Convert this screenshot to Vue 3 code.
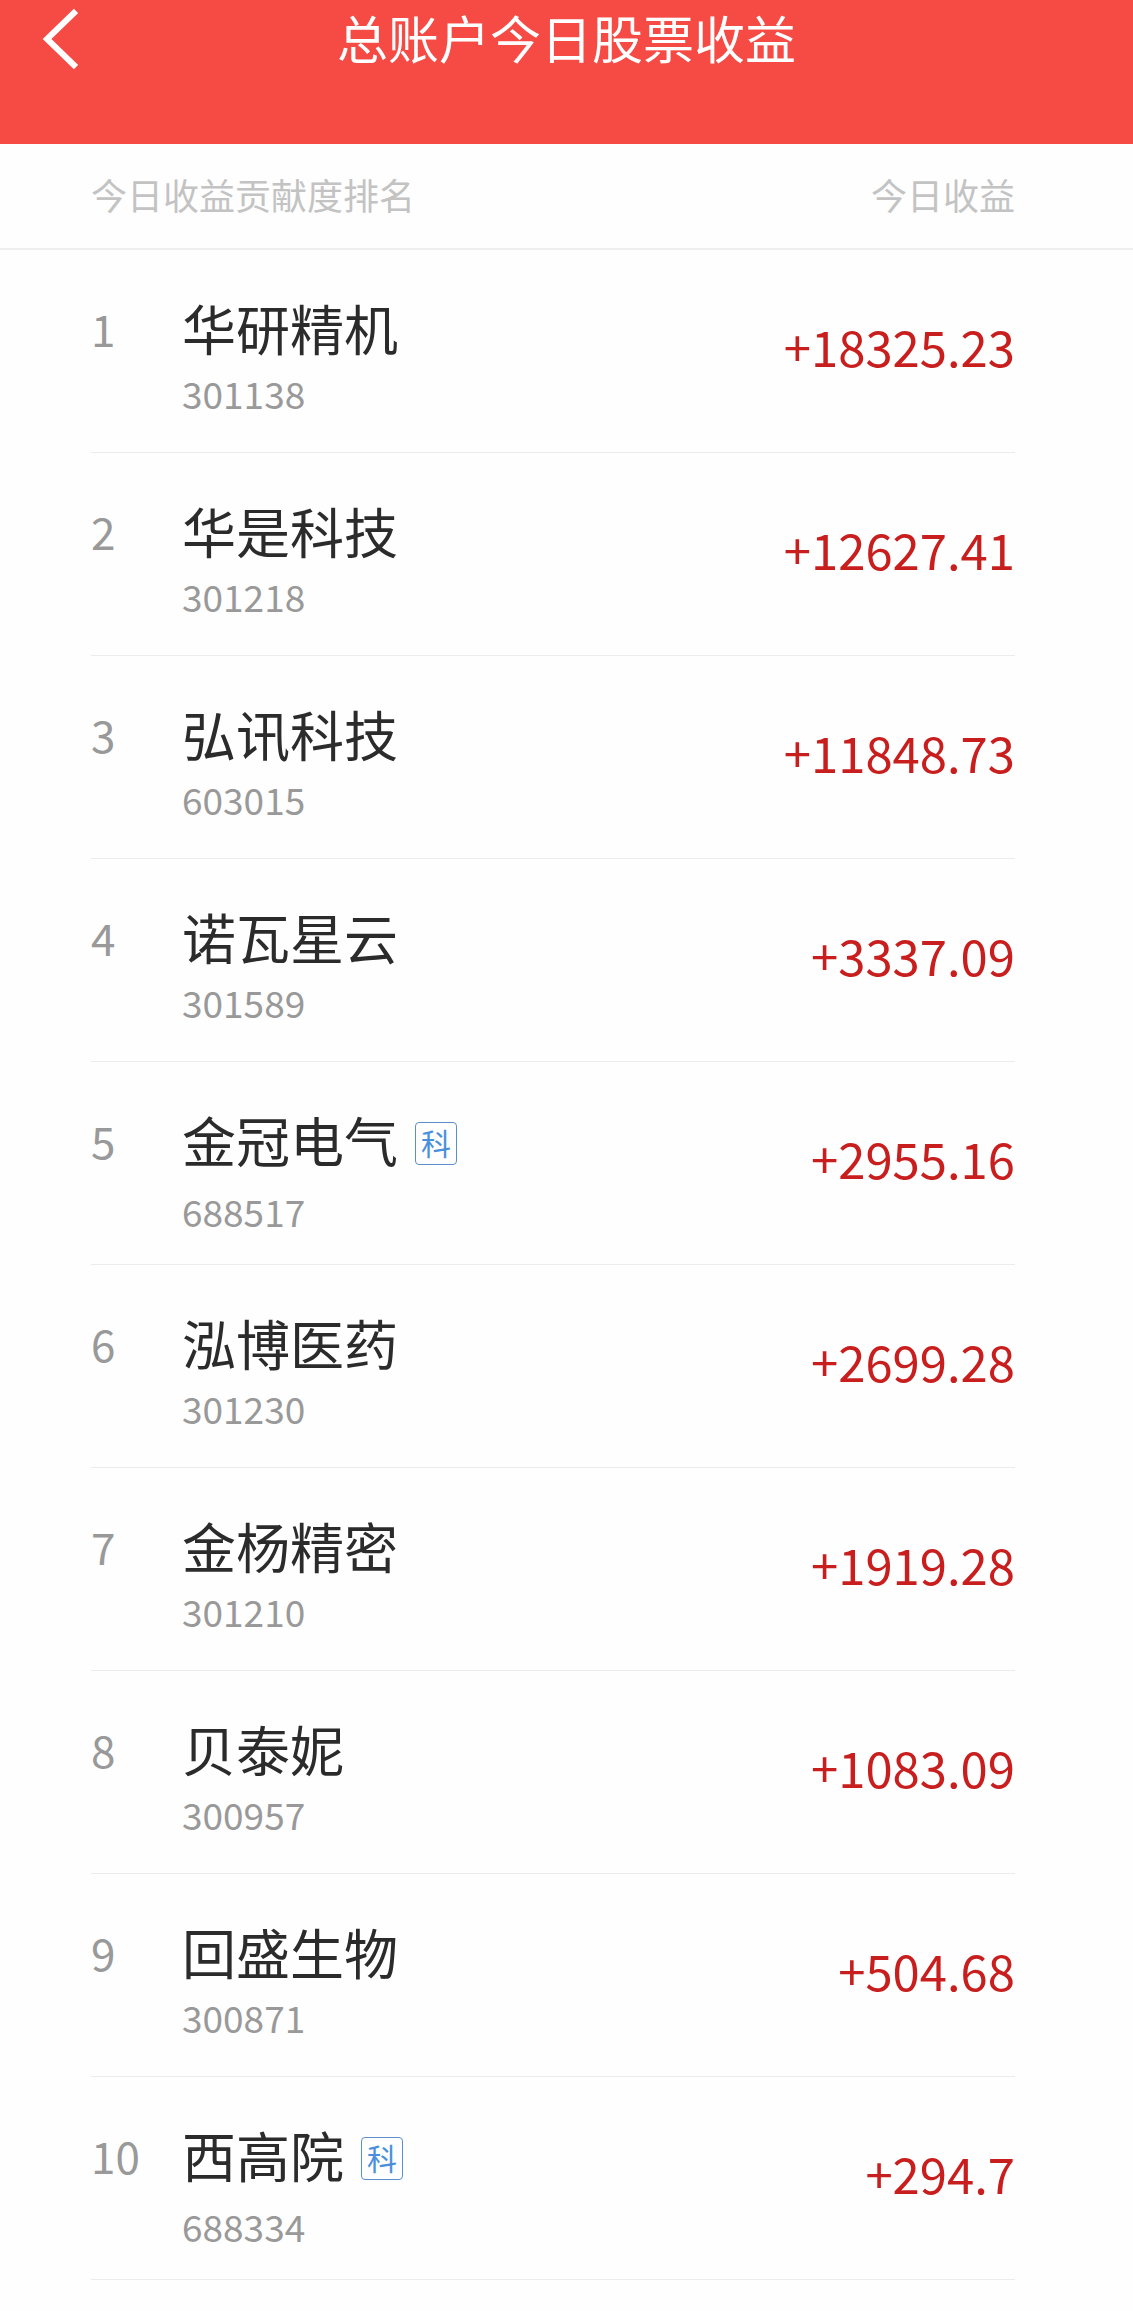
<script setup>
import { ref } from "vue";

const stocks = ref([
  { name: "华研精机", code: "301138", profit: "+18325.23" },
  { name: "华是科技", code: "301218", profit: "+12627.41" },
  { name: "弘讯科技", code: "603015", profit: "+11848.73" },
  { name: "诺瓦星云", code: "301589", profit: "+3337.09" },
  { name: "金冠电气", code: "688517", profit: "+2955.16", tag: "科" },
  { name: "泓博医药", code: "301230", profit: "+2699.28" },
  { name: "金杨精密", code: "301210", profit: "+1919.28" },
  { name: "贝泰妮", code: "300957", profit: "+1083.09" },
  { name: "回盛生物", code: "300871", profit: "+504.68" },
  { name: "西高院", code: "688334", profit: "+294.7", tag: "科" },
]);

const goBack = () => {
  window.history.back();
};
</script>


<template>
  <div class="page">
    <header class="top-bar">
      <button type="button" class="back" aria-label="返回" @click="goBack">
        <svg viewBox="0 0 40 64" width="40" height="64" fill="none">
          <path d="M38 4 L9 32 L38 60" stroke="#fff" stroke-width="6" />
        </svg>
      </button>
      <h1>总账户今日股票收益</h1>
    </header>

    <table>
      <thead>
        <tr>
          <th scope="col">今日收益贡献度排名</th>
          <th scope="col">今日收益</th>
        </tr>
      </thead>
      <tbody>
        <tr v-for="(stock, index) in stocks" :key="stock.code">
          <td class="rank">{{ index + 1 }}</td>
          <td class="stock">
            <div class="name" :class="{ tagged: stock.tag }">
              {{ stock.name }}
              <span v-if="stock.tag" class="tag">{{ stock.tag }}</span>
            </div>
            <div class="code">{{ stock.code }}</div>
          </td>
          <td class="profit">{{ stock.profit }}</td>
        </tr>
      </tbody>
    </table>
  </div>
</template>


<style>
body {
  margin: 0;
  background-color: #fefefe;
}
</style>

<style scoped>
.page {
  min-height: 100vh;
  background-color: #fefefe;
  font-family: "Noto Sans CJK SC", sans-serif;
}

.top-bar {
  display: grid;
  grid-template-columns: 120px 1fr 120px;
  align-items: start;
  height: 144px;
  background-color: #f64a45;
}

.back {
  display: flex;
  padding: 7px 38px;
  border: none;
  background: none;
  cursor: pointer;
}

h1 {
  margin: 0;
  padding-top: 7px;
  color: #fff;
  font-size: 51px;
  font-weight: 400;
  line-height: 60px;
  text-align: center;
}

table,
thead,
tbody {
  display: block;
}

thead tr {
  display: flex;
  justify-content: space-between;
  padding: 20px 118px 24px 91px;
  border-bottom: 2px solid #eee;
}

th {
  padding: 0;
  color: #c3c3c3;
  font-size: 36px;
  font-weight: 400;
  line-height: 60px;
}

tbody tr {
  display: grid;
  grid-template-columns: 91px 1fr auto;
  box-sizing: border-box;
  height: 203px;
  margin: 0 118px 0 91px;
  padding-top: 48px;
  border-bottom: 1px solid #ececec;
}

td {
  padding: 0;
  line-height: 60px;
}

.rank {
  color: #999;
  font-size: 44px;
}

.name {
  display: flex;
  align-items: center;
  gap: 17px;
  margin-bottom: 11px;
  color: #2b2b2b;
  font-size: 54px;
}

.name.tagged {
  margin-bottom: 17px;
}

.tag {
  box-sizing: border-box;
  width: 42px;
  height: 43px;
  margin-top: 6px;
  border: 1px solid #5a8fcb;
  border-radius: 4px;
  color: #4a8fdc;
  font-size: 30px;
  line-height: 38px;
  text-align: center;
}

.code {
  color: #999;
  font-size: 37px;
  line-height: 48px;
}

.profit {
  padding-top: 18px;
  color: #c81e1e;
  font-size: 49px;
  text-align: right;
}
</style>
